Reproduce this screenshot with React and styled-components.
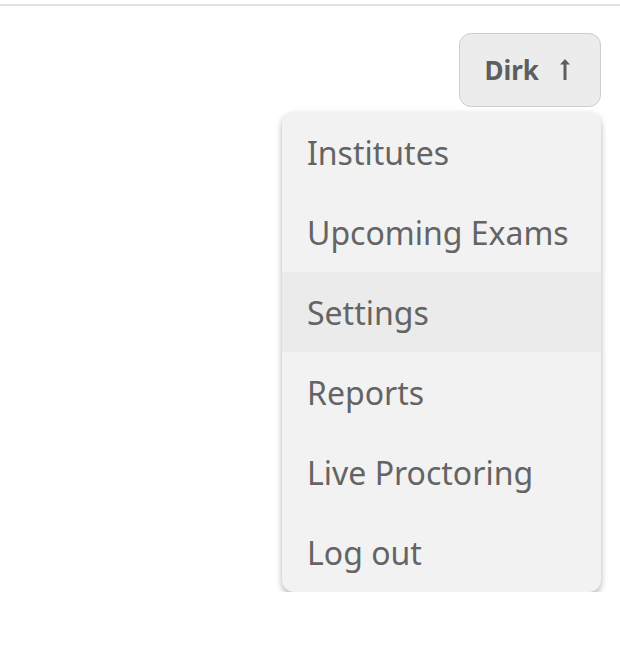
import React, { useState } from 'react';
import styled, { createGlobalStyle } from 'styled-components';

const GlobalStyle = createGlobalStyle`
  html, body {
    margin: 0;
    padding: 0;
    background: #fff;
    font-family: "Noto Sans", "Open Sans", sans-serif;
  }
`;

const TopBar = styled.div`
  height: 4px;
  border-bottom: 2px solid #e3e3e3;
`;

const UserArea = styled.div`
  display: flex;
  flex-direction: column;
  align-items: flex-end;
  padding: 27px 19px 0 0;
`;

const UserButton = styled.button`
  display: flex;
  align-items: center;
  gap: 21px;
  height: 74px;
  padding: 0 30px 0 24px;
  background: #ececec;
  border: 1px solid #cdcdcd;
  border-radius: 12px;
  color: #5e5e5e;
  font-family: inherit;
  font-size: 26px;
  font-weight: 700;
  cursor: pointer;
`;

const ArrowIcon = styled.svg`
  width: 10px;
  height: 21px;
  margin-top: -2px;
  fill: #5e5e5e;
`;

const Menu = styled.ul`
  list-style: none;
  margin: 5px 0 0;
  padding: 0;
  width: 319px;
  background: #f2f2f2;
  border-radius: 12px;
  box-shadow: 0 3px 6px rgba(0, 0, 0, 0.3);
  overflow: hidden;
`;

const MenuItem = styled.li`
  height: 80px;
  display: flex;
  align-items: center;
  padding: 0 25px;
  font-size: 32px;
  color: #646464;
  background: ${props => (props.active ? '#ebebeb' : 'transparent')};
  cursor: pointer;
`;

const items = ['Institutes', 'Upcoming Exams', 'Settings', 'Reports', 'Live Proctoring', 'Log out'];

export default function App() {
  const [hovered] = useState('Settings');

  return (
    <>
      <GlobalStyle />
      <TopBar />
      <UserArea>
        <UserButton>
          <span>Dirk</span>
          <ArrowIcon viewBox="0 0 10 21">
            <polygon points="5,0 10,5.5 6.5,5.5 6.5,21 3.5,21 3.5,5.5 0,5.5" />
          </ArrowIcon>
        </UserButton>
        <Menu>
          {items.map(item => (
            <MenuItem key={item} active={item === hovered}>
              {item}
            </MenuItem>
          ))}
        </Menu>
      </UserArea>
    </>
  );
}
